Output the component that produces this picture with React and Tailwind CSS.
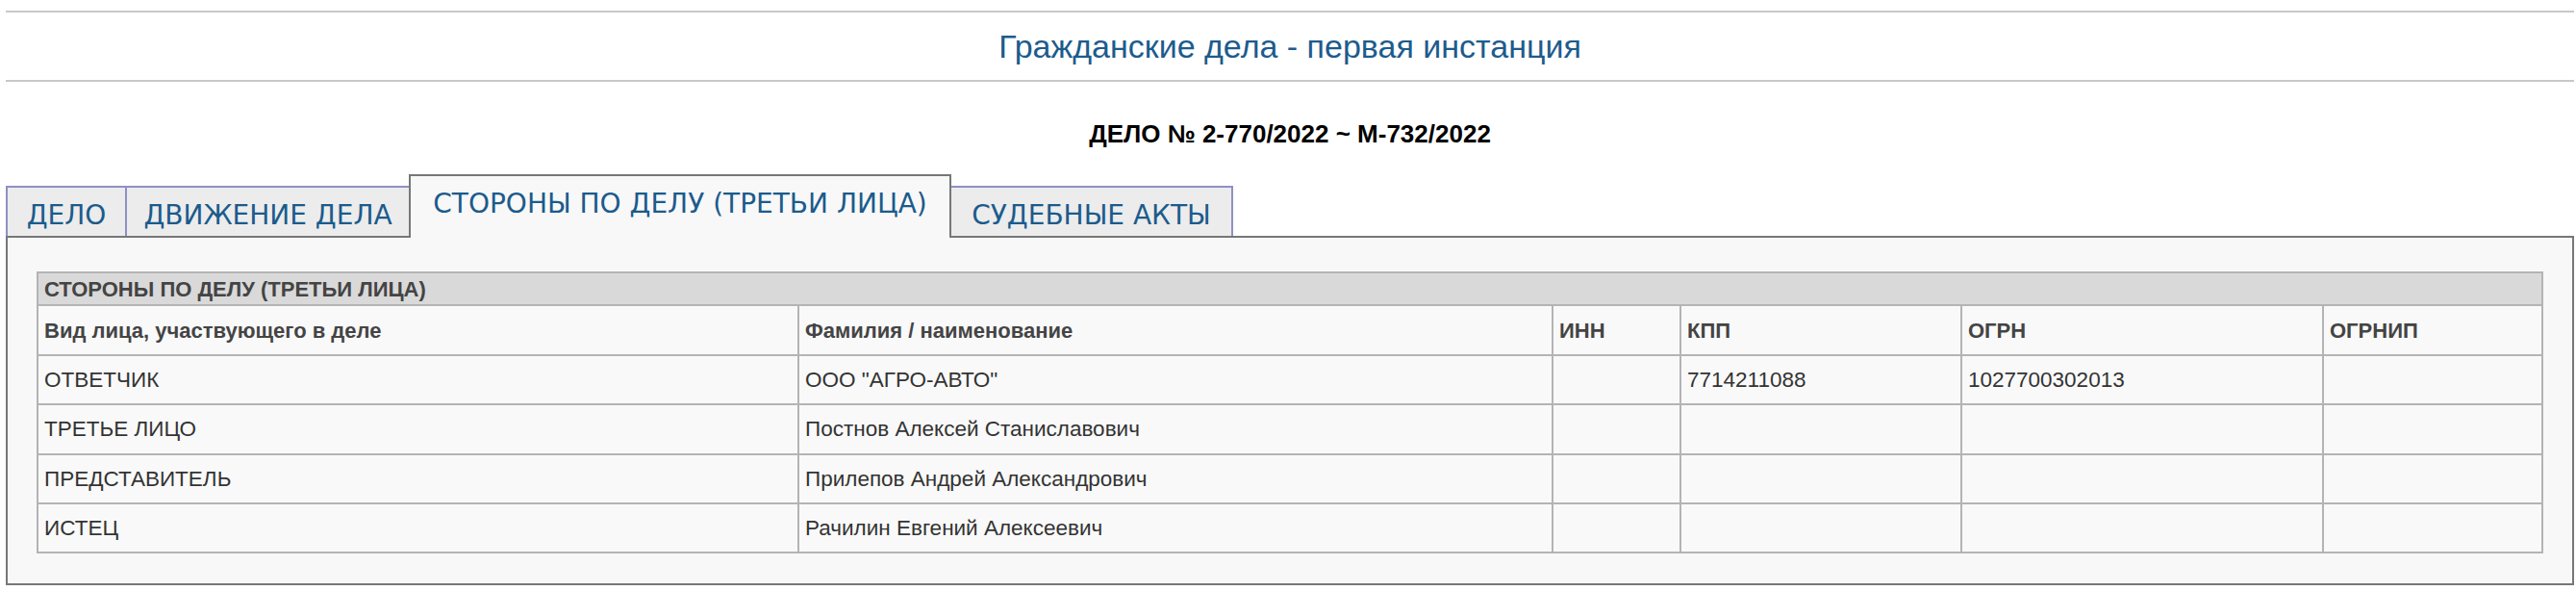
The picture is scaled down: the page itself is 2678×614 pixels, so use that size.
import React from "react";

const parties = [
    { role: "ОТВЕТЧИК", name: "ООО \"АГРО-АВТО\"", inn: "", kpp: "7714211088", ogrn: "1027700302013", ogrnip: "" },
    { role: "ТРЕТЬЕ ЛИЦО", name: "Постнов Алексей Станиславович", inn: "", kpp: "", ogrn: "", ogrnip: "" },
    { role: "ПРЕДСТАВИТЕЛЬ", name: "Прилепов Андрей Александрович", inn: "", kpp: "", ogrn: "", ogrnip: "" },
    { role: "ИСТЕЦ", name: "Рачилин Евгений Алексеевич", inn: "", kpp: "", ogrn: "", ogrnip: "" },
];

const rowHeights = ["h-[51px]", "h-[52px]", "h-[51px]", "h-[51px]"];

function Cell({ children, bold, h }) {
    return (
        <div
            className={`${h} flex items-center pl-[6px] border-r-2 border-b-2 border-[#b4b4b4] ${bold ? "text-[22px] font-bold text-[#444]" : "text-[22.5px] text-[#333]"
                }`}
        >
            {children}
        </div>
    );
}

export default function App() {
    return (
        <div
            className="w-[2678px] h-[614px] bg-white pl-[6px] pr-[2px] pt-[11px]"
            style={{ fontFamily: '"Liberation Sans", Arial, sans-serif' }}
        >
            <div className="border-t-2 border-[#c8c8c8]" />
            <div className="h-[70px] flex items-center justify-center text-[34px] text-[#1d5b8d]">
                Гражданские дела - первая инстанция
            </div>
            <div className="border-t-2 border-[#c8c8c8]" />

            <div className="h-[96px] pt-[13px] flex items-center justify-center text-[26px] font-bold text-black">
                ДЕЛО № 2-770/2022 ~ М-732/2022
            </div>

            {/* Tabs */}
            <div
                className="h-[64px] flex items-end text-[28px] text-[#1b5b8c] leading-[34px]"
                style={{ fontFamily: '"DejaVu Sans", Verdana, sans-serif' }}
            >
                <div className="w-[124px] h-[52px] pt-[12px] flex justify-center bg-[#ececec] border-l-2 border-t-2 border-[#8e90c4]">
                    ДЕЛО
                </div>
                <div className="w-[295px] h-[52px] pt-[12px] flex justify-center bg-[#ececec] border-l-2 border-t-2 border-[#8e90c4]">
                    ДВИЖЕНИЕ ДЕЛА
                </div>
                <div className="relative z-10 w-[564px] h-[66px] -mb-[2px] pt-[12px] flex justify-center bg-[#f8f8f8] border-l-2 border-t-2 border-r-2 border-[#777]">
                    СТОРОНЫ ПО ДЕЛУ (ТРЕТЬИ ЛИЦА)
                </div>
                <div className="w-[293px] h-[52px] pt-[12px] flex justify-center bg-[#ececec] border-r-2 border-t-2 border-[#8e90c4]">
                    СУДЕБНЫЕ АКТЫ
                </div>
            </div>

            {/* Panel */}
            <div className="h-[363px] border-2 border-[#777] bg-[#f8f8f8] pt-[35px] px-[30px]">
                <div className="grid grid-cols-[791px_784px_133px_292px_376px_228px] border-l-2 border-t-2 border-[#b4b4b4] bg-[#f9f9f9]">
                    <div className="col-span-6 h-[34px] flex items-center pl-[6px] border-r-2 border-b-2 border-[#b4b4b4] bg-[#d9d9d9] text-[22px] font-bold text-[#444]">
                        СТОРОНЫ ПО ДЕЛУ (ТРЕТЬИ ЛИЦА)
                    </div>
                    <Cell bold h="h-[52px]">Вид лица, участвующего в деле</Cell>
                    <Cell bold h="h-[52px]">Фамилия / наименование</Cell>
                    <Cell bold h="h-[52px]">ИНН</Cell>
                    <Cell bold h="h-[52px]">КПП</Cell>
                    <Cell bold h="h-[52px]">ОГРН</Cell>
                    <Cell bold h="h-[52px]">ОГРНИП</Cell>
                    {parties.map((p, i) => (
                        <React.Fragment key={i}>
                            <Cell h={rowHeights[i]}>{p.role}</Cell>
                            <Cell h={rowHeights[i]}>{p.name}</Cell>
                            <Cell h={rowHeights[i]}>{p.inn}</Cell>
                            <Cell h={rowHeights[i]}>{p.kpp}</Cell>
                            <Cell h={rowHeights[i]}>{p.ogrn}</Cell>
                            <Cell h={rowHeights[i]}>{p.ogrnip}</Cell>
                        </React.Fragment>
                    ))}
                </div>
            </div>
        </div>
    );
}
